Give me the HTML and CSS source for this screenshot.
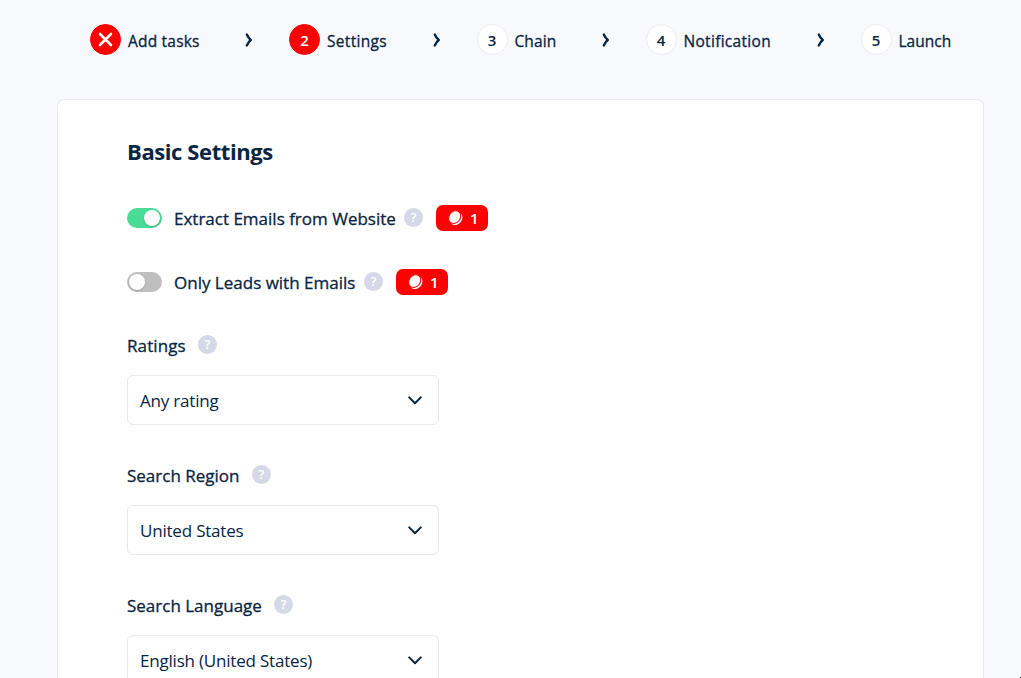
FILE: index.html
```html
<!DOCTYPE html>
<html lang="en">
<head>
<meta charset="utf-8">
<title>Basic Settings</title>
<link rel="stylesheet" href="styles.css">
</head>
<body>
<svg class="defs" width="0" height="0" aria-hidden="true">
  <symbol id="next" viewBox="0 0 8 14"><path d="M1.8 1.6 Q3.4 5.2 5.8 7 Q3.4 8.8 1.8 12.4" fill="none" stroke="currentColor" stroke-width="2.4" stroke-linecap="round" stroke-linejoin="round"/></symbol>
  <symbol id="down" viewBox="0 0 14 9"><path d="M1.2 1.4 L7 7.2 L12.8 1.4" fill="none" stroke="currentColor" stroke-width="2" stroke-linecap="round" stroke-linejoin="round"/></symbol>
  <symbol id="coin" viewBox="0 0 16 16"><ellipse cx="8.4" cy="8.7" rx="5.5" ry="6.9" transform="rotate(38 8.4 8.7)" fill="currentColor"/><ellipse cx="6.7" cy="7.1" rx="5.6" ry="6.8" transform="rotate(38 6.7 7.1)" fill="currentColor" stroke="#f00" stroke-width="1"/></symbol>
</svg>
<nav class="steps">
  <div class="step"><span class="dot active"><svg width="15" height="15" viewBox="0 0 15 15"><path d="M2 2 L13 13 M13 2 L2 13" stroke="#fff" stroke-width="2.6" stroke-linecap="round"/></svg></span><span class="name w-add">Add tasks</span></div>
  <svg class="next" width="8" height="14"><use href="#next"/></svg>
  <div class="step"><span class="dot active">2</span><span class="name w-settings">Settings</span></div>
  <svg class="next" width="8" height="14"><use href="#next"/></svg>
  <div class="step"><span class="dot">3</span><span class="name w-chain">Chain</span></div>
  <svg class="next" width="8" height="14"><use href="#next"/></svg>
  <div class="step"><span class="dot">4</span><span class="name w-note">Notification</span></div>
  <svg class="next" width="8" height="14"><use href="#next"/></svg>
  <div class="step"><span class="dot">5</span><span class="name w-launch">Launch</span></div>
</nav>
<main class="card">
  <h1 class="title">Basic Settings</h1>
  <div class="option">
    <span class="toggle on"><span class="knob"></span></span>
    <span class="label w-extract">Extract Emails from Website</span>
    <span class="help">?</span>
    <span class="price"><svg width="16" height="16"><use href="#coin"/></svg>1</span>
  </div>
  <div class="option">
    <span class="toggle"><span class="knob"></span></span>
    <span class="label w-only">Only Leads with Emails</span>
    <span class="help">?</span>
    <span class="price"><svg width="16" height="16"><use href="#coin"/></svg>1</span>
  </div>
  <section class="field">
    <div class="caption"><span class="label w-ratings">Ratings</span><span class="help">?</span></div>
    <div class="select"><span>Any rating</span><svg width="14" height="9"><use href="#down"/></svg></div>
  </section>
  <section class="field">
    <div class="caption"><span class="label w-region">Search Region</span><span class="help">?</span></div>
    <div class="select"><span>United States</span><svg width="14" height="9"><use href="#down"/></svg></div>
  </section>
  <section class="field">
    <div class="caption"><span class="label w-lang">Search Language</span><span class="help">?</span></div>
    <div class="select"><span>English (United States)</span><svg width="14" height="9"><use href="#down"/></svg></div>
  </section>
</main>
<span class="corner"></span>
</body>
</html>
```
FILE: styles.css
```css
* { box-sizing: border-box; }
body {
  margin: 0;
  height: 678px;
  overflow: hidden;
  background: #f8f9fd;
  color: #082542;
  font-family: "Segoe UI", "Open Sans", "Noto Sans", sans-serif;
  font-size: 16px;
  font-weight: 500;
}
.defs { display: block; height: 0; }
.steps { display: flex; align-items: center; height: 99px; padding: 0 0 20px 90px; }
.step { display: flex; align-items: center; gap: 7px; }
.dot {
  display: flex; align-items: center; justify-content: center;
  width: 31px; height: 31px;
  border: 1px solid #ececf1; border-radius: 50%;
  background: #fff;
  font-size: 15px; font-weight: 600;
}
.dot.active { background: #f00; border-color: #f00; color: #fff; }
.name { white-space: nowrap; line-height: 22px; padding-top: 2px; font-size: 15.5px; -webkit-text-stroke: .3px; }
.next { margin: 1px 36px 0 45px; }
.w-add { width: 72px; letter-spacing: .2px; }
.w-settings { width: 60.5px; letter-spacing: .3px; }
.w-chain { width: 42px; letter-spacing: .1px; }
.w-note { width: 88px; letter-spacing: .3px; }
.w-launch { width: 53px; }
.card {
  width: 927px; height: 579px;
  overflow: hidden;
  margin-left: 57px; padding: 35px 69px 0;
  background: #fff;
  border: 1px solid #e8e8ed; border-bottom: 0; border-radius: 7px 7px 0 0;
}
.title { margin: 0; height: 70px; font-size: 22px; line-height: 32px; font-weight: 700; white-space: nowrap; letter-spacing: -.4px; }
.option { display: flex; align-items: center; height: 26px; margin-bottom: 38px; }
.toggle { display: flex; align-items: center; width: 35px; height: 20px; padding: 0 2px; margin-right: 12px; border-radius: 10px; background: #bfbfbf; }
.toggle.on { justify-content: flex-end; background: #4adc97; }
.knob { width: 16px; height: 16px; margin-bottom: 1px; border-radius: 50%; background: #fff; box-shadow: 0 1px 2px rgba(0, 40, 30, .2); }
.label { font-size: 17px; line-height: 24px; white-space: nowrap; -webkit-text-stroke: .3px; }
.option .label { padding-top: 1px; }
.w-extract { width: 222px; }
.w-only { width: 182px; }
.w-ratings { width: 60px; letter-spacing: .1px; }
.w-region { width: 114px; }
.w-lang { width: 136px; }
.help {
  width: 19px; height: 19px; margin-left: 8px;
  border-radius: 50%; background: #d5d8e6; color: #fff;
  font-size: 13px; line-height: 19px; font-weight: 600; text-align: center;
}
.option .help { margin-bottom: 1px; }
.price {
  display: flex; align-items: center; gap: 6px;
  width: 52px; height: 26px; margin-left: 13px; padding-left: 12px;
  border-radius: 7px; background: #f00; color: #fff;
  font-size: 15px; line-height: 26px; font-weight: 600;
}
.field { height: 130px; }
.caption { display: flex; height: 42px; }
.caption .label { line-height: 25px; }
.caption .help { margin-left: 11px; margin-top: 2px; }
.select {
  display: flex; align-items: center; justify-content: space-between;
  width: 312px; height: 50px; padding: 0 16px 0 12px;
  border: 1px solid #e8e8ed; border-radius: 6px; background: #fff;
  font-size: 17px; font-weight: 400; white-space: nowrap; letter-spacing: -.2px;
}
.corner { position: absolute; left: 1020px; top: 677px; width: 1px; height: 1px; background: #111; }
```
